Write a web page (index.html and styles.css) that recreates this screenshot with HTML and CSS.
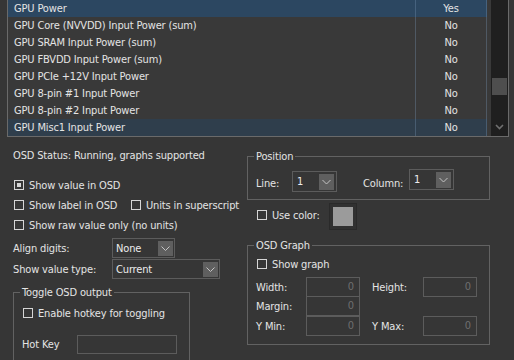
FILE: index.html
```html
<!DOCTYPE html>
<html lang="en">
<head>
    <meta charset="UTF-8">
    <meta name="viewport" content="width=device-width, initial-scale=1.0">
    <title>Monitoring properties</title>
    <link rel="stylesheet" href="styles.css">
</head>
<body>
    <div class="list">
        <div class="rows">
            <div class="row selected"><span class="name">GPU Power</span><span class="value">Yes</span></div>
            <div class="row"><span class="name">GPU Core (NVVDD) Input Power (sum)</span><span class="value">No</span></div>
            <div class="row"><span class="name">GPU SRAM Input Power (sum)</span><span class="value">No</span></div>
            <div class="row"><span class="name">GPU FBVDD Input Power (sum)</span><span class="value">No</span></div>
            <div class="row"><span class="name">GPU PCIe +12V Input Power</span><span class="value">No</span></div>
            <div class="row"><span class="name">GPU 8-pin #1 Input Power</span><span class="value">No</span></div>
            <div class="row"><span class="name">GPU 8-pin #2 Input Power</span><span class="value">No</span></div>
            <div class="row hover"><span class="name">GPU Misc1 Input Power</span><span class="value">No</span></div>
        </div>
        <div class="scrollbar">
            <div class="thumb"></div>
            <svg class="scroll-arrow" width="9" height="6" viewBox="0 0 9 6">
                <polyline points="1,1 4.5,4.5 8,1" fill="none" stroke="#707070" stroke-width="1.6"/>
            </svg>
        </div>
    </div>

    <div class="settings">
        <div class="col-left">
            <p class="status">OSD Status: Running, graphs supported</p>

            <div class="check-row">
                <label class="check"><span class="box checked"></span>Show value in OSD</label>
            </div>
            <div class="check-row check-pair">
                <label class="check"><span class="box"></span>Show label in OSD</label>
                <label class="check"><span class="box"></span>Units in superscript</label>
            </div>
            <div class="check-row">
                <label class="check"><span class="box"></span>Show raw value only (no units)</label>
            </div>

            <div class="field-row align-row">
                <span class="field-label">Align digits:</span>
                <div class="combo combo-none">
                    <span class="combo-text">None</span>
                    <span class="combo-btn"><svg width="15" height="15" viewBox="0 0 15 15"><polyline points="3.5,5.5 7.5,9.5 11.5,5.5" fill="none" stroke="#c4c4c4" stroke-width="1"/></svg></span>
                </div>
            </div>
            <div class="field-row type-row">
                <span class="field-label">Show value type:</span>
                <div class="combo combo-type">
                    <span class="combo-text">Current</span>
                    <span class="combo-btn"><svg width="15" height="15" viewBox="0 0 15 15"><polyline points="3.5,5.5 7.5,9.5 11.5,5.5" fill="none" stroke="#c4c4c4" stroke-width="1"/></svg></span>
                </div>
            </div>

            <fieldset class="group toggle-group">
                <legend>Toggle OSD output</legend>
                <div class="check-row toggle-check">
                    <label class="check"><span class="box"></span>Enable hotkey for toggling</label>
                </div>
                <div class="hotkey-row">
                    <span class="hotkey-label">Hot Key</span>
                    <div class="textbox hotkey-box"></div>
                </div>
            </fieldset>
        </div>

        <div class="col-right">
            <fieldset class="group position-group">
                <legend>Position</legend>
                <div class="position-row">
                    <span class="pos-label line-label">Line:</span>
                    <div class="combo combo-line">
                        <span class="combo-text">1</span>
                        <span class="combo-btn"><svg width="15" height="16" viewBox="0 0 15 16"><polyline points="3.5,6 7.5,10 11.5,6" fill="none" stroke="#c4c4c4" stroke-width="1"/></svg></span>
                    </div>
                    <span class="pos-label column-label">Column:</span>
                    <div class="combo combo-column">
                        <span class="combo-text">1</span>
                        <span class="combo-btn"><svg width="15" height="16" viewBox="0 0 15 16"><polyline points="3.5,6 7.5,10 11.5,6" fill="none" stroke="#c4c4c4" stroke-width="1"/></svg></span>
                    </div>
                </div>
            </fieldset>

            <div class="color-row">
                <label class="check color-check"><span class="box"></span>Use color:</label>
                <div class="swatch"><div class="swatch-fill"></div></div>
            </div>

            <fieldset class="group graph-group">
                <legend>OSD Graph</legend>
                <div class="check-row graph-check">
                    <label class="check"><span class="box"></span>Show graph</label>
                </div>
                <div class="graph-row">
                    <span class="graph-label">Width:</span>
                    <div class="textbox num">0</div>
                    <span class="graph-label second">Height:</span>
                    <div class="textbox num">0</div>
                </div>
                <div class="graph-row margin-row">
                    <span class="graph-label">Margin:</span>
                    <div class="textbox num">0</div>
                </div>
                <div class="graph-row ymin-row">
                    <span class="graph-label">Y Min:</span>
                    <div class="textbox num">0</div>
                    <span class="graph-label second">Y Max:</span>
                    <div class="textbox num">0</div>
                </div>
            </fieldset>
        </div>
    </div>
</body>
</html>
```

FILE: styles.css
```css
:root {
    --bg: #363636;
    --list-bg: #393939;
    --text: #e4e4e4;
    --line: #626262;
    --selected: #2c4761;
    --hover: #2f3e4c;
}

* {
    margin: 0;
    padding: 0;
    box-sizing: border-box;
}

body {
    width: 514px;
    height: 360px;
    overflow: hidden;
    background: var(--bg);
    color: var(--text);
    font-family: "DejaVu Sans Condensed", "DejaVu Sans", sans-serif;
    font-size: 11px;
    line-height: 13px;
    letter-spacing: -0.15px;
}

/* sensor list */
.list {
    display: flex;
    width: 502px;
    height: 137px;
    margin-left: 7px;
    border: 1px solid #6a6a6a;
    border-top: none;
    background: var(--list-bg);
}

.rows {
    width: 479px;
    margin-right: 4px;
}

.row {
    display: flex;
    height: 17px;
    line-height: 17px;
}

.row.selected {
    background: var(--selected);
}

.row.hover {
    background: var(--hover);
}

.name {
    width: 407px;
    padding-left: 6px;
    white-space: nowrap;
}

.value {
    width: 72px;
    text-align: center;
    border-left: 1px solid rgba(120, 150, 180, 0.35);
    border-right: 1px solid rgba(120, 150, 180, 0.35);
}

.scrollbar {
    display: flex;
    flex-direction: column;
    align-items: center;
    width: 17px;
    background: #1f1f1f;
}

.thumb {
    width: 15px;
    height: 17px;
    margin-top: 78px;
    background: #4e4e4e;
}

.scroll-arrow {
    margin-top: 29px;
}

/* settings area */
.settings {
    display: flex;
    padding-left: 13px;
}

.col-left {
    width: 234px;
    flex: none;
}

.col-right {
    width: 243px;
    flex: none;
}

.status {
    height: 38px;
    line-height: 38px;
    white-space: nowrap;
}

.check-row {
    display: flex;
    align-items: center;
    height: 20px;
    padding-left: 1px;
}

.check-pair {
    display: grid;
    grid-template-columns: 117px max-content;
}

.check {
    display: flex;
    align-items: center;
    white-space: nowrap;
    flex: none;
}

.box {
    display: flex;
    align-items: center;
    justify-content: center;
    width: 10px;
    height: 10px;
    margin-right: 5px;
    border: 1px solid #d6d6d6;
    flex: none;
}

.box.checked::after {
    content: "";
    width: 4px;
    height: 4px;
    background: #d6d6d6;
}

.field-row {
    display: flex;
    align-items: center;
}

.align-row {
    margin-top: 3px;
}

.type-row {
    margin-top: 1px;
}

.field-label {
    width: 99px;
    flex: none;
}

.combo {
    display: flex;
    align-items: center;
    justify-content: space-between;
    height: 20px;
    border: 1px solid #5c5c5c;
    flex: none;
}

.combo-text {
    padding-left: 3px;
    color: #ececec;
}

.combo-btn {
    display: flex;
    width: 15px;
    height: 15px;
    margin-right: 1px;
    background: #5f5f5f;
}

.combo-none {
    width: 63px;
}

.combo-type {
    width: 108px;
}

/* group boxes */
.group {
    min-width: 0;
    border: 1px solid var(--line);
}

.group legend {
    margin-left: 6px;
    padding: 0 2px;
    line-height: 13px;
}

.toggle-group {
    width: 177px;
    height: 90px;
    margin-top: 7px;
}

.toggle-check {
    margin-top: 4px;
    padding-left: 9px;
}

.hotkey-row {
    display: flex;
    align-items: center;
    margin-top: 12px;
    padding-left: 8px;
}

.hotkey-label {
    width: 55px;
}

.textbox {
    height: 20px;
    border: 1px solid #5c5c5c;
    flex: none;
}

.hotkey-box {
    width: 100px;
    height: 19px;
}

.position-group {
    width: 243px;
    height: 50px;
    margin-top: 13px;
}

.position-row {
    display: flex;
    align-items: flex-start;
    padding-left: 8px;
}

.pos-label {
    margin-top: 14px;
    flex: none;
}

.line-label {
    width: 36px;
}

.column-label {
    width: 46px;
    margin-left: 26px;
}

.combo-line,
.combo-column {
    width: 45px;
    height: 21px;
}

.combo-line {
    margin-top: 8px;
}

.combo-column {
    margin-top: 6px;
}

.combo-line .combo-btn,
.combo-column .combo-btn {
    height: 16px;
    margin-right: 2px;
}

.combo-line .combo-text,
.combo-column .combo-text {
    padding-left: 4px;
}

.color-row {
    display: flex;
    align-items: center;
    height: 27px;
    margin-top: 3px;
    padding-left: 10px;
}

.color-check {
    width: 72px;
    margin-bottom: 3px;
}

.swatch {
    width: 28px;
    height: 27px;
    padding: 3px;
    border: 1px solid #2a2a2a;
    background: #313131;
}

.swatch-fill {
    width: 100%;
    height: 100%;
    background: #9b9b9b;
}

.graph-group {
    width: 243px;
    height: 106px;
    margin-top: 9px;
}

.graph-check {
    margin-top: 2px;
    padding-left: 9px;
}

.graph-row {
    display: flex;
    align-items: center;
    margin-top: 3px;
    padding-left: 8px;
}

.margin-row {
    margin-top: -1px;
}

.ymin-row {
    margin-top: 0;
}

.graph-label {
    width: 50px;
    flex: none;
}

.graph-label.second {
    width: 51px;
    margin-left: 12px;
}

.num {
    width: 54px;
    padding-right: 5px;
    text-align: right;
    line-height: 18px;
    color: #6e6e6e;
}
```
